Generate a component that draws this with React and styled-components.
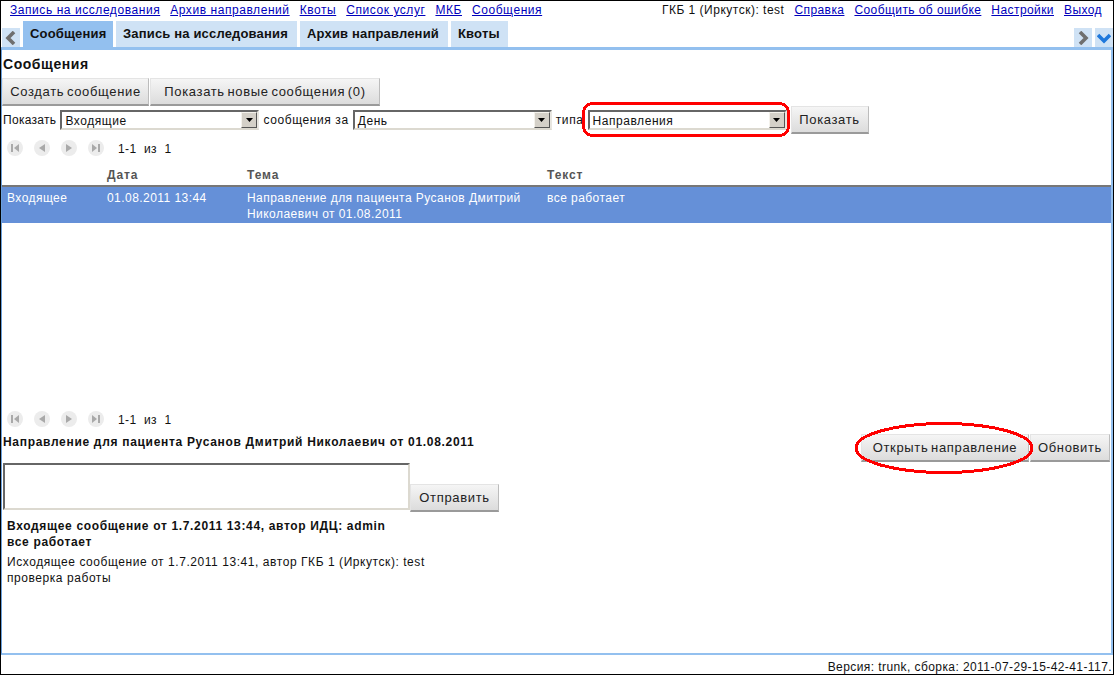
import React from 'react';
import styled, { createGlobalStyle } from 'styled-components';

const GlobalStyle = createGlobalStyle`
  html, body {
    margin: 0;
    padding: 0;
    background: #fff;
  }
  body {
    font-family: "Liberation Sans", Arial, sans-serif;
    font-size: 12px;
    letter-spacing: 0.5px;
    color: #111;
  }
`;

const topLinks = ['Запись на исследования', 'Архив направлений', 'Квоты', 'Список услуг', 'МКБ', 'Сообщения'];
const userLinks = ['Справка', 'Сообщить об ошибке', 'Настройки', 'Выход'];
const tabs = [
  { label: 'Сообщения', width: 90, active: true },
  { label: 'Запись на исследования', width: 181 },
  { label: 'Архив направлений', width: 148 },
  { label: 'Квоты', width: 57 },
];

function Pager() {
  const shapes = [
    'M6 6h2v8H6z M14 6v8l-5-4z',
    'M13 6v8l-6-4z',
    'M7 6v8l6-4z',
    'M6 6v8l5-4z M12 6h2v8h-2z',
  ];
  return (
    <PagerRow>
      <PagerIcons>
        {shapes.map((d) => (
          <svg key={d} width="20" height="20" viewBox="0 0 20 20">
            <circle cx="10" cy="10" r="8" fill="#ececec" />
            <path d={d} fill="#a9a9a9" />
          </svg>
        ))}
      </PagerIcons>
      <PagerText>1-1&nbsp; из&nbsp; 1</PagerText>
    </PagerRow>
  );
}

function Select({ value }) {
  return (
    <SelectBox>
      <SelectValue>{value}</SelectValue>
      <SelectArrow>
        <svg width="7" height="4" viewBox="0 0 7 4">
          <path d="M0 0h7L3.5 4z" fill="#000" />
        </svg>
      </SelectArrow>
    </SelectBox>
  );
}

function App() {
  return (
    <Page>
      <GlobalStyle />
      <TopBar>
        <LinkGroup>
          {topLinks.map((l) => (
            <TopLink key={l} href="#">{l}</TopLink>
          ))}
        </LinkGroup>
        <LinkGroup>
          <span>ГКБ 1 (Иркутск): test</span>
          {userLinks.map((l) => (
            <UserLink key={l} href="#">{l}</UserLink>
          ))}
        </LinkGroup>
      </TopBar>

      <TabBar>
        <ScrollButton>
          <svg width="12" height="14" viewBox="0 0 12 14">
            <path d="M9 1L3 7l6 6" fill="none" stroke="#6f6f6f" strokeWidth="3.6" />
          </svg>
        </ScrollButton>
        <Tabs>
          {tabs.map((t) => (
            <Tab key={t.label} $active={t.active} $width={t.width}>{t.label}</Tab>
          ))}
        </Tabs>
        <TabTools>
          <ScrollButton>
            <svg width="12" height="14" viewBox="0 0 12 14">
              <path d="M3 1l6 6-6 6" fill="none" stroke="#6f6f6f" strokeWidth="3.6" />
            </svg>
          </ScrollButton>
          <ScrollButton>
            <svg width="14" height="12" viewBox="0 0 14 12">
              <path d="M1 3l6 6 6-6" fill="none" stroke="#1f78dc" strokeWidth="3.6" />
            </svg>
          </ScrollButton>
        </TabTools>
      </TabBar>

      <Panel>
        <Heading>Сообщения</Heading>
        <ButtonRow>
          <GrayButton $width={147}>Создать сообщение</GrayButton>
          <GrayButton $width={230}>Показать новые сообщения (0)</GrayButton>
        </ButtonRow>

        <FilterRow>
          <FilterLabel $spacing={0.3}>Показать</FilterLabel>
          <Select value="Входящие" />
          <FilterLabel $spacing={0.6}>сообщения за</FilterLabel>
          <Select value="День" />
          <FilterLabel $spacing={0.6}>типа</FilterLabel>
          <Select value="Направления" />
          <GrayButton $width={78}>Показать</GrayButton>
          <SelectMark width="208" height="35" viewBox="0 0 208 35">
            <rect x="1.5" y="1.5" width="205" height="32" rx="9" fill="none" stroke="#f00" strokeWidth="3" shapeRendering="crispEdges" />
          </SelectMark>
        </FilterRow>

        <Pager />

        <TableArea>
          <TableRow>
            <HeadCell $width={100} />
            <HeadCell $width={140}>Дата</HeadCell>
            <HeadCell $width={300}>Тема</HeadCell>
            <HeadCell>Текст</HeadCell>
          </TableRow>
          <SelectedRow>
            <Cell $width={100}>Входящее</Cell>
            <Cell $width={140}>01.08.2011 13:44</Cell>
            <Cell $width={300}>Направление для пациента Русанов Дмитрий Николаевич от 01.08.2011</Cell>
            <Cell>все работает</Cell>
          </SelectedRow>
        </TableArea>

        <Pager />

        <DetailHeader>
          <DetailTitle>Направление для пациента Русанов Дмитрий Николаевич от 01.08.2011</DetailTitle>
          <DetailButtons>
            <GrayButton $width={168}>Открыть направление</GrayButton>
            <GrayButton $width={80}>Обновить</GrayButton>
            <OpenMark width="180" height="52" viewBox="0 0 180 52">
              <ellipse cx="90" cy="26" rx="88" ry="24.5" fill="none" stroke="#f00" strokeWidth="3" shapeRendering="crispEdges" />
            </OpenMark>
          </DetailButtons>
        </DetailHeader>

        <ReplyRow>
          <ReplyInput />
          <GrayButton $width={89}>Отправить</GrayButton>
        </ReplyRow>

        <MessageList>
          <Message $bold>
            Входящее сообщение от 1.7.2011 13:44, автор ИДЦ: admin
            <br />
            все работает
          </Message>
          <Message>
            Исходящее сообщение от 1.7.2011 13:41, автор ГКБ 1 (Иркутск): test
            <br />
            проверка работы
          </Message>
        </MessageList>
      </Panel>

      <Footer>Версия: trunk, сборка: 2011-07-29-15-42-41-117.</Footer>
    </Page>
  );
}

export default App;

const Page = styled.div`
  width: 1114px;
  height: 675px;
  box-sizing: border-box;
  border: 1px solid #000;
  display: flex;
  flex-direction: column;
  overflow: hidden;
  background: #fff;
`;
const TopBar = styled.div`
  height: 20px;
  flex: none;
  display: flex;
  justify-content: space-between;
  align-items: center;
  padding: 0 11px 2px 9px;
  box-sizing: border-box;
`;
const LinkGroup = styled.div`
  display: flex;
  gap: 10px;
`;
const TopLink = styled.a`
  color: #0000bb;
  letter-spacing: 0.56px;
  text-decoration: underline;
`;
const UserLink = styled(TopLink)`
  letter-spacing: 0.42px;
`;
const TabBar = styled.div`
  height: 26px;
  flex: none;
  display: flex;
  align-items: flex-end;
  padding: 0 0 0 1px;
`;
const Tabs = styled.div`
  flex: 1;
  display: flex;
  gap: 3px;
  height: 26px;
  margin-left: 3px;
`;
const Tab = styled.div`
  width: ${(p) => p.$width}px;
  background: ${(p) => (p.$active ? '#93c0ef' : '#cfe2f5')};
  font-size: 13px;
  font-weight: bold;
  letter-spacing: 0.17px;
  padding: 5px 0 0 7px;
  box-sizing: border-box;
  color: #111;
`;
const ScrollButton = styled.div`
  width: 18px;
  height: 19px;
  background: #cfe2f5;
  display: flex;
  align-items: center;
  justify-content: center;
`;
const TabTools = styled.div`
  display: flex;
  gap: 3px;
`;
const Panel = styled.div`
  flex: 1;
  border-top: 3px solid #93c0ef;
  border-bottom: 2px solid #93c0ef;
  border-left: 1px solid #6aa0dc;
  border-right: 2px solid #93c0ef;
  min-height: 0;
`;
const Heading = styled.div`
  font-size: 14px;
  font-weight: bold;
  letter-spacing: 0.55px;
  height: 28px;
  line-height: 28px;
  padding-left: 1px;
`;
const ButtonRow = styled.div`
  display: flex;
  gap: 1px;
`;
const GrayButton = styled.div`
  width: ${(p) => p.$width}px;
  height: 28px;
  flex: none;
  box-sizing: border-box;
  border: 1px solid #bcbcbc;
  border-top-color: #e4e4e4;
  border-left-color: #e4e4e4;
  border-bottom: 2px solid #9a9a9a;
  background: linear-gradient(#f5f5f5, #dcdcdc);
  font-size: 13px;
  letter-spacing: 0.65px;
  word-spacing: -1.5px;
  color: #222;
  display: flex;
  align-items: center;
  justify-content: center;
`;
const FilterRow = styled.div`
  position: relative;
  display: flex;
  align-items: center;
  gap: 4px;
  height: 28px;
  padding-left: 1px;
`;
const FilterLabel = styled.span`
  white-space: nowrap;
  letter-spacing: ${(p) => p.$spacing}px;
`;
const SelectBox = styled.div`
  width: 199px;
  height: 20px;
  flex: none;
  box-sizing: border-box;
  border: 2px solid;
  border-color: #666 #e8e6e0 #dcd9d0 #666;
  display: flex;
  align-items: center;
  background: #fff;
`;
const SelectValue = styled.span`
  flex: 1;
  padding: 1px 0 0 3px;
  font-size: 12px;
  letter-spacing: 0.55px;
`;
const SelectArrow = styled.span`
  width: 16px;
  height: 16px;
  box-sizing: border-box;
  background: #d4d0c8;
  border: 1px solid;
  border-color: #f4f2ec #555 #555 #f4f2ec;
  display: flex;
  align-items: center;
  justify-content: center;
`;
const SelectMark = styled.svg`
  position: absolute;
  left: 580px;
  top: -4px;
`;
const PagerRow = styled.div`
  display: flex;
  align-items: center;
  height: 28px;
  padding-left: 3px;
`;
const PagerIcons = styled.div`
  display: flex;
  gap: 7px;
  svg {
    display: block;
  }
`;
const PagerText = styled.span`
  margin: 2px 0 0 12px;
  letter-spacing: 0.4px;
`;
const TableArea = styled.div`
  height: 243px;
`;
const TableRow = styled.div`
  display: flex;
  height: 23px;
  border-bottom: 2px solid #777;
  padding-left: 5px;
`;
const HeadCell = styled.div`
  width: ${(p) => (p.$width ? `${p.$width}px` : 'auto')};
  flex: ${(p) => (p.$width ? 'none' : 1)};
  font-size: 12px;
  font-weight: bold;
  letter-spacing: 0.9px;
  color: #555;
  line-height: 26px;
`;
const SelectedRow = styled.div`
  display: flex;
  height: 36px;
  background: #6590d8;
  color: #fff;
  padding: 3px 0 0 5px;
  box-sizing: border-box;
  line-height: 16px;
  letter-spacing: 0.45px;
`;
const Cell = styled.div`
  width: ${(p) => (p.$width ? `${p.$width}px` : 'auto')};
  flex: ${(p) => (p.$width ? 'none' : 1)};
  padding-right: ${(p) => (p.$width ? 8 : 0)}px;
  box-sizing: border-box;
`;
const DetailHeader = styled.div`
  display: flex;
  justify-content: space-between;
  align-items: flex-start;
  height: 30px;
  padding: 1px 1px 0 1px;
  box-sizing: border-box;
`;
const DetailTitle = styled.div`
  font-weight: bold;
  letter-spacing: 0.69px;
  padding-top: 1px;
`;
const DetailButtons = styled.div`
  position: relative;
  display: flex;
  gap: 1px;
`;
const OpenMark = styled.svg`
  position: absolute;
  left: -7px;
  top: -12px;
`;
const ReplyRow = styled.div`
  display: flex;
  align-items: flex-end;
  padding-left: 1px;
`;
const ReplyInput = styled.div`
  width: 407px;
  height: 47px;
  margin-bottom: 2px;
  box-sizing: border-box;
  border: 2px solid;
  border-color: #666 #dcd9d0 #dcd9d0 #666;
`;
const MessageList = styled.div`
  padding: 6px 0 0 5px;
`;
const Message = styled.div`
  font-weight: ${(p) => (p.$bold ? 'bold' : 'normal')};
  letter-spacing: ${(p) => (p.$bold ? 0.66 : 0.56)}px;
  line-height: 16px;
  margin-bottom: 4px;
`;
const Footer = styled.div`
  height: 19px;
  flex: none;
  text-align: right;
  line-height: 24px;
  letter-spacing: 0.42px;
  padding-right: 1px;
`;
